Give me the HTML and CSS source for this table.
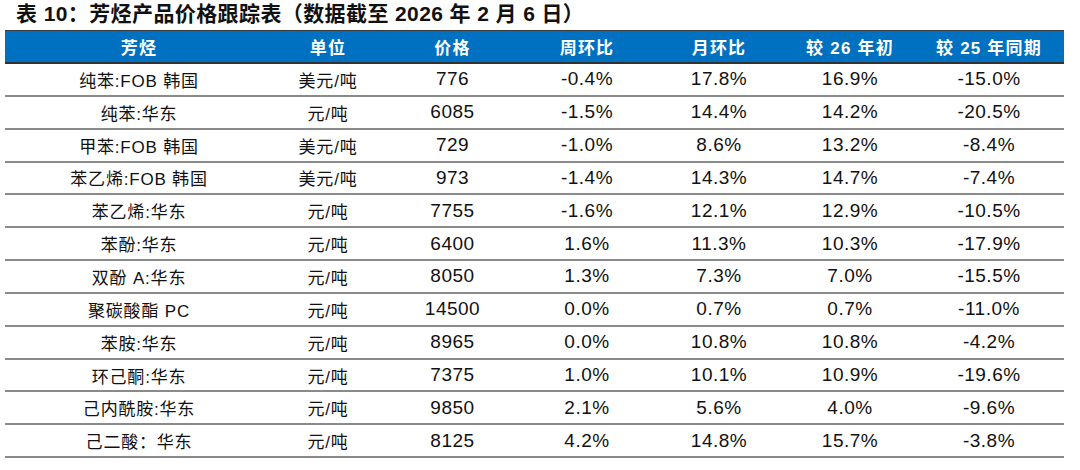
FILE: index.html
```html
<!DOCTYPE html>
<html lang="zh-CN">
<head>
<meta charset="utf-8">
<title>芳烃产品价格跟踪表</title>
<link rel="stylesheet" href="styles.css">
</head>
<body>
<div class="page">
  <h1 class="title">表 10：芳烃产品价格跟踪表（数据截至 2026 年 2 月 6 日）</h1>
  <table class="grid">
    <colgroup>
      <col class="c1"><col class="c2"><col class="c3"><col class="c4"><col class="c5"><col class="c6"><col class="c7">
    </colgroup>
    <thead>
      <tr><th>芳烃</th><th>单位</th><th>价格</th><th>周环比</th><th>月环比</th><th>较 26 年初</th><th>较 25 年同期</th></tr>
    </thead>
    <tbody>
      <tr><td class="zh">纯苯:FOB 韩国</td><td class="zh">美元/吨</td><td>776</td><td>-0.4%</td><td>17.8%</td><td>16.9%</td><td>-15.0%</td></tr>
      <tr><td class="zh">纯苯:华东</td><td class="zh">元/吨</td><td>6085</td><td>-1.5%</td><td>14.4%</td><td>14.2%</td><td>-20.5%</td></tr>
      <tr><td class="zh">甲苯:FOB 韩国</td><td class="zh">美元/吨</td><td>729</td><td>-1.0%</td><td>8.6%</td><td>13.2%</td><td>-8.4%</td></tr>
      <tr><td class="zh">苯乙烯:FOB 韩国</td><td class="zh">美元/吨</td><td>973</td><td>-1.4%</td><td>14.3%</td><td>14.7%</td><td>-7.4%</td></tr>
      <tr><td class="zh">苯乙烯:华东</td><td class="zh">元/吨</td><td>7755</td><td>-1.6%</td><td>12.1%</td><td>12.9%</td><td>-10.5%</td></tr>
      <tr><td class="zh">苯酚:华东</td><td class="zh">元/吨</td><td>6400</td><td>1.6%</td><td>11.3%</td><td>10.3%</td><td>-17.9%</td></tr>
      <tr><td class="zh">双酚 A:华东</td><td class="zh">元/吨</td><td>8050</td><td>1.3%</td><td>7.3%</td><td>7.0%</td><td>-15.5%</td></tr>
      <tr><td class="zh">聚碳酸酯 PC</td><td class="zh">元/吨</td><td>14500</td><td>0.0%</td><td>0.7%</td><td>0.7%</td><td>-11.0%</td></tr>
      <tr><td class="zh">苯胺:华东</td><td class="zh">元/吨</td><td>8965</td><td>0.0%</td><td>10.8%</td><td>10.8%</td><td>-4.2%</td></tr>
      <tr><td class="zh">环己酮:华东</td><td class="zh">元/吨</td><td>7375</td><td>1.0%</td><td>10.1%</td><td>10.9%</td><td>-19.6%</td></tr>
      <tr><td class="zh">己内酰胺:华东</td><td class="zh">元/吨</td><td>9850</td><td>2.1%</td><td>5.6%</td><td>4.0%</td><td>-9.6%</td></tr>
      <tr><td class="zh">己二酸：华东</td><td class="zh">元/吨</td><td>8125</td><td>4.2%</td><td>14.8%</td><td>15.7%</td><td>-3.8%</td></tr>
    </tbody>
  </table>
</div>
</body>
</html>
```
FILE: styles.css
```css
html, body {
  margin: 0;
  padding: 0;
  background: #ffffff;
}
.page {
  width: 1080px;
  height: 470px;
  overflow: hidden;
  font-family: "Liberation Sans", "Noto Sans CJK SC", sans-serif;
  color: #111;
}
.title {
  margin: 0;
  height: 30px;
  padding-left: 16px;
  font-size: 21px;
  line-height: 28px;
  font-weight: bold;
  color: #111;
  letter-spacing: 0.4px;
}
.grid {
  margin-left: 5px;
  width: 1059px;
  table-layout: fixed;
  border-collapse: collapse;
}
.c1 { width: 268px; }
.c2 { width: 110px; }
.c3 { width: 139px; }
.c4 { width: 130px; }
.c5 { width: 134px; }
.c6 { width: 128px; }
.c7 { width: 150px; }
.grid th {
  background: #0070c0;
  color: #fff;
  font-size: 17px;
  font-weight: bold;
  letter-spacing: 1.2px;
  height: 31px;
  padding: 0;
  text-align: center;
  border-top: 1px solid #3a3a3a;
  border-bottom: 2px solid #333;
}
.grid td {
  height: 30.85px;
  padding: 0;
  text-align: center;
  font-size: 19px;
  letter-spacing: 0.5px;
  border-bottom: 2px solid #8a8a8a;
  color: #111;
}
.grid td.zh {
  font-size: 17px;
  letter-spacing: 0.8px;
}
```
